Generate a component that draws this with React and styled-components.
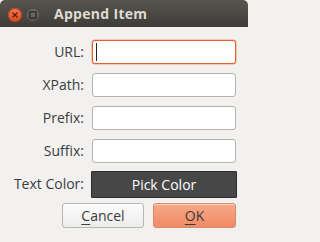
import React from "react";
import styled, { createGlobalStyle } from "styled-components";

const GlobalStyle = createGlobalStyle`
  html, body {
    margin: 0;
    padding: 0;
    background: #f2f1f0;
  }
  * {
    box-sizing: border-box;
  }
`;

const Window = styled.div`
  width: 248px;
  height: 242px;
  background: #f2f1f0;
  font-family: "Open Sans", "Noto Sans", sans-serif;
  display: flex;
  flex-direction: column;
`;

const TitleBar = styled.div`
  height: 27px;
  display: flex;
  align-items: center;
  padding: 2px 0 0 8px;
  background: linear-gradient(#57554f, #3e3c38);
  border-radius: 5px 5px 0 0;
`;

const WinButton = styled.div`
  width: 14px;
  height: 14px;
  border-radius: 50%;
  margin-right: 4px;
  display: flex;
  align-items: center;
  justify-content: center;
  background: ${(p) =>
    p.$close
      ? "linear-gradient(#f57b55, #dc4a1c)"
      : "linear-gradient(#73716c, #58564f)"};
  box-shadow: inset 0 0 0 1px ${(p) => (p.$close ? "#b8421d" : "#47453f")};
`;

const Title = styled.div`
  margin-left: 10px;
  margin-top: -2px;
  color: #dfdbd2;
  font-weight: 700;
  font-size: 14px;
  letter-spacing: 0.3px;
`;

const Form = styled.div`
  display: grid;
  grid-template-columns: 74px 1fr;
  column-gap: 8px;
  row-gap: 9px;
  align-items: center;
  padding: 13px 12px 0 10px;
`;

const Label = styled.div`
  text-align: right;
  color: #3c3c3c;
  font-size: 14px;
  line-height: 24px;
`;

const Field = styled.div`
  height: 24px;
  background: #ffffff;
  border: 1px solid ${(p) => (p.$focused ? "#e2602c" : "#b4b2ae")};
  border-radius: 3px;
  box-shadow: ${(p) => (p.$focused ? "0 0 0 0.5px #f0a080" : "none")};
  display: flex;
  align-items: center;
  padding-left: 3px;
`;

const Caret = styled.span`
  width: 1px;
  height: 18px;
  background: #222;
`;

const ColorButton = styled.button`
  height: 27px;
  margin: -1px -1px -2px -1px;
  border: 1px solid #2c2c2c;
  border-radius: 1px;
  background: #474747;
  color: #ffffff;
  font-family: inherit;
  font-size: 14px;
  padding: 0;
`;

const Actions = styled.div`
  display: flex;
  justify-content: flex-end;
  gap: 9px;
  padding: 0 12px 0 0;
  margin-top: 7px;
`;

const DialogButton = styled.button`
  width: ${(p) => (p.$primary ? "83px" : "82px")};
  height: 25px;
  padding: 0;
  border-radius: 3px;
  font-family: inherit;
  font-size: 14px;
  color: #3c3c3c;
  border: 1px solid ${(p) => (p.$primary ? "#d98a6b" : "#b9b7b3")};
  background: ${(p) =>
    p.$primary
      ? "linear-gradient(#f8a98a, #f08b64)"
      : "linear-gradient(#fdfdfd, #ececeb)"};
  box-shadow: inset 0 1px 0 rgba(255, 255, 255, 0.5);

  u {
    text-decoration-thickness: 1px;
    text-underline-offset: 3px;
  }
`;

export default function App() {
  return (
    <>
      <GlobalStyle />
      <Window>
        <TitleBar>
          <WinButton $close>
            <svg width="6" height="6" viewBox="0 0 6 6">
              <path d="M0.5 0.5L5.5 5.5M5.5 0.5L0.5 5.5" stroke="#5a1d0a" strokeWidth="1.2" />
            </svg>
          </WinButton>
          <WinButton>
            <svg width="8" height="8" viewBox="0 0 8 8">
              <rect x="0.75" y="0.75" width="6.5" height="6.5" rx="1" fill="none" stroke="#2f2e2a" strokeWidth="1.5" />
            </svg>
          </WinButton>
          <Title>Append Item</Title>
        </TitleBar>
        <Form>
          <Label>URL:</Label>
          <Field $focused>
            <Caret />
          </Field>
          <Label>XPath:</Label>
          <Field />
          <Label>Prefix:</Label>
          <Field />
          <Label>Suffix:</Label>
          <Field />
          <Label>Text Color:</Label>
          <ColorButton>Pick Color</ColorButton>
        </Form>
        <Actions>
          <DialogButton>
            <u>C</u>ancel
          </DialogButton>
          <DialogButton $primary>
            <u>O</u>K
          </DialogButton>
        </Actions>
      </Window>
    </>
  );
}
